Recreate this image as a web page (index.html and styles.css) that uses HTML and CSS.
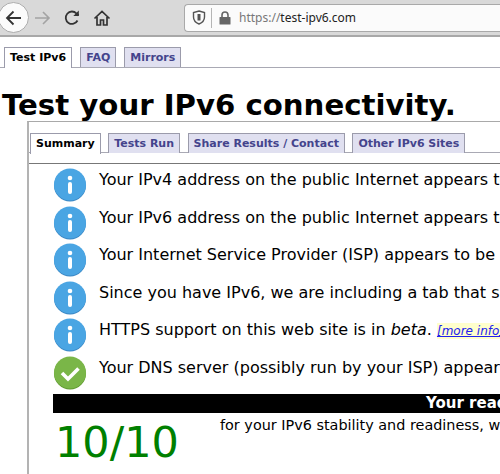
FILE: index.html
```html
<!DOCTYPE html>
<html lang="en">
<head>
    <meta charset="UTF-8">
    <title>Test your IPv6 connectivity.</title>
    <link rel="stylesheet" href="styles.css">
</head>
<body>
    <div class="toolbar">
        <div class="back-btn">
            <svg width="20" height="20" viewBox="0 0 20 20" fill="none" stroke="#333" stroke-width="1.8"><path d="M17 10H3M9.500 3.500L3 10l6.500 6.500"/></svg>
        </div>
        <svg class="nav-icon" width="18" height="18" viewBox="0 0 18 18" fill="none" stroke="#a3a3a3" stroke-width="1.6"><path d="M2 9h14M10 3l6 6-6 6"/></svg>
        <svg class="nav-icon" width="18" height="18" viewBox="0 0 18 18" fill="none" stroke="#333" stroke-width="1.8"><path d="M14.500 11.500A6.200 6.200 0 1 1 13.500 4.500L15.500 6.500"/><path d="M15.800 1.500v5.500h-5.500" stroke="none" fill="#333"/></svg>
        <svg class="nav-icon" width="18" height="18" viewBox="0 0 18 18" fill="none" stroke="#333" stroke-width="1.7"><path d="M1.500 9.500L9 2.500l7.500 7M4 8v8h3.500v-5h3v5H14V8"/></svg>
        <div class="urlbar">
            <svg width="14" height="15" viewBox="0 0 14 15" fill="none" stroke="#555" stroke-width="1.4"><path d="M7 1l5.500 1.500V7c0 3.500-2.500 5.800-5.500 7C4 12.800 1.500 10.500 1.500 7V2.500z"/><path d="M7 4v6.500" stroke-width="3"/></svg>
            <span class="url-sep"></span>
            <svg width="12" height="14" viewBox="0 0 12 14" fill="#666"><path d="M1 6h10a.500.500 0 0 1 .500.500v6.500a.500.500 0 0 1-.500.500H1a.500.500 0 0 1-.500-.500V6.500A.500.500 0 0 1 1 6z"/><path d="M3 6V4a3 3 0 0 1 6 0v2" fill="none" stroke="#666" stroke-width="1.6"/></svg>
            <span class="url"><span class="url-scheme">https://</span>test-ipv6.com</span>
        </div>
    </div>

    <div class="tabs top-tabs">
        <a class="tab active">Test IPv6</a>
        <a class="tab">FAQ</a>
        <a class="tab">Mirrors</a>
    </div>

    <h1>Test your IPv6 connectivity.</h1>

    <div class="panel">
        <div class="tabs inner-tabs">
            <a class="tab active">Summary</a>
            <a class="tab">Tests Run</a>
            <a class="tab">Share Results / Contact</a>
            <a class="tab">Other IPv6 Sites</a>
        </div>
        <div class="rows">
            <div class="row">
                <svg class="status" viewBox="0 0 34 34"><use href="#info"/></svg>
                <p>Your IPv4 address on the public Internet appears to be 203.0.113.7</p>
            </div>
            <div class="row">
                <svg class="status" viewBox="0 0 34 34"><use href="#info"/></svg>
                <p>Your IPv6 address on the public Internet appears to be 2001:db8::7</p>
            </div>
            <div class="row">
                <svg class="status" viewBox="0 0 34 34"><use href="#info"/></svg>
                <p>Your Internet Service Provider (ISP) appears to be EXAMPLE</p>
            </div>
            <div class="row">
                <svg class="status" viewBox="0 0 34 34"><use href="#info"/></svg>
                <p>Since you have IPv6, we are including a tab that shows how well</p>
            </div>
            <div class="row">
                <svg class="status" viewBox="0 0 34 34"><use href="#info"/></svg>
                <p>HTTPS support on this web site is in <em>beta</em>. <a class="more" href="#">[more info]</a></p>
            </div>
            <div class="row">
                <svg class="status" viewBox="0 0 34 34">
                    <circle cx="17" cy="17.500" r="16" fill="#5f9a2f"/>
                    <circle cx="17" cy="16.500" r="16" fill="#7ab648"/>
                    <path d="M9 17l6 6 10.500-10.500" fill="none" stroke="#fff" stroke-width="3.600"/>
                </svg>
                <p>Your DNS server (possibly run by your ISP) appears to have IPv6</p>
            </div>
        </div>
        <div class="ready-bar"><span>Your readiness score</span></div>
        <div class="score">
            <div class="score-num">10/10</div>
            <div class="score-text">for your IPv6 stability and readiness, when publishers are forced</div>
        </div>
    </div>

    <svg width="0" height="0" class="defs">
        <symbol id="info" viewBox="0 0 34 34">
            <circle cx="17" cy="17.500" r="16" fill="#3a87c4"/>
            <circle cx="17" cy="16.500" r="16" fill="#4aa5e3"/>
            <circle cx="17" cy="10" r="2.300" fill="#fff"/>
            <rect x="15" y="14" width="4" height="12" rx="2" fill="#fff"/>
        </symbol>
    </svg>
</body>
</html>
```

FILE: styles.css
```css
html, body {
    margin: 0;
    height: 474px;
    overflow: hidden;
    background: #fff;
    font-family: "DejaVu Sans", sans-serif;
}
.defs {
    display: block;
    height: 0;
}
.toolbar {
    display: flex;
    align-items: center;
    height: 35px;
    background: #d9d9d9;
    border-bottom: 2px solid #a8a8a8;
    box-sizing: content-box;
}
.back-btn {
    display: flex;
    align-items: center;
    justify-content: center;
    flex: none;
    width: 29px;
    height: 29px;
    margin-left: -2px;
    background: #fbfbfb;
    border: 1px solid #adadad;
    border-radius: 50%;
}
.nav-icon {
    flex: none;
    margin-left: 4px;
}
.nav-icon + .nav-icon {
    margin-left: 12px;
}
.urlbar {
    display: flex;
    align-items: center;
    flex: 1;
    height: 26px;
    margin-left: 73px;
    padding-left: 7px;
    background: #fbfbfb;
    border: 1px solid #a9a9a9;
    border-right: none;
    border-radius: 4px 0 0 4px;
}
.url-sep {
    width: 1px;
    height: 20px;
    margin: 0 7px 0 5px;
    background: #b5b5b5;
}
.url {
    margin-left: 8px;
    font-family: "Noto Sans", sans-serif;
    font-size: 12px;
    color: #222;
    white-space: nowrap;
}
.url-scheme {
    color: #777;
}
.tabs {
    display: flex;
    align-items: flex-end;
    gap: 8px;
    white-space: nowrap;
    border-bottom: 1px solid #a9a9b4;
}
.top-tabs {
    height: 21px;
    margin-top: 9px;
    padding-left: 4px;
}
.tab {
    display: block;
    height: 20px;
    padding: 0 5px;
    box-sizing: border-box;
    font-size: 11px;
    font-weight: bold;
    line-height: 20px;
    color: #44448c;
    background: #e0e0f0;
    border: 1px solid #9b9bab;
    border-bottom: none;
}
.tab.active {
    color: #000;
    background: #fff;
    height: 21px;
    margin-bottom: -1px;
}
h1 {
    margin: 21px 0 0 2px;
    font-size: 29.200px;
    line-height: 32px;
    white-space: nowrap;
}
.panel {
    margin: 0 0 0 27px;
    padding-top: 10px;
    height: 360px;
    border-top: 1px solid #a9a9a9;
    border-left: 2px solid #b3b3b3;
}
.inner-tabs {
    height: 21px;
    padding-left: 1px;
    gap: 7.500px;
    border-bottom: none;
    box-shadow: inset 0 -1px 0 #a9a9b4;
}
.rows {
    border-top: 1px solid #777;
    margin-top: 10px;
    padding: 4px 0 0 24px;
}
.row {
    display: flex;
    gap: 12px;
    height: 37.600px;
}
.status {
    flex: none;
    width: 34px;
    height: 34px;
}
.row p {
    margin: 0;
    font-size: 16px;
    line-height: 24px;
    white-space: nowrap;
}
.more {
    padding: 1px 0;
    font-size: 12px;
    font-style: italic;
    color: #2222ee;
    background: #ffffcc;
}
.ready-bar {
    height: 19px;
    margin: 0 0 0 24px;
    padding-left: 373px;
    font-size: 15px;
    font-weight: bold;
    line-height: 19px;
    color: #fff;
    white-space: nowrap;
    background: #000;
}
.score {
    display: flex;
    margin-left: 24px;
}
.score-num {
    flex: none;
    width: 165px;
    padding-left: 2px;
    font-size: 43px;
    line-height: 58px;
    color: #008000;
}
.score-text {
    font-size: 14.400px;
    line-height: 24px;
    white-space: nowrap;
}
```
